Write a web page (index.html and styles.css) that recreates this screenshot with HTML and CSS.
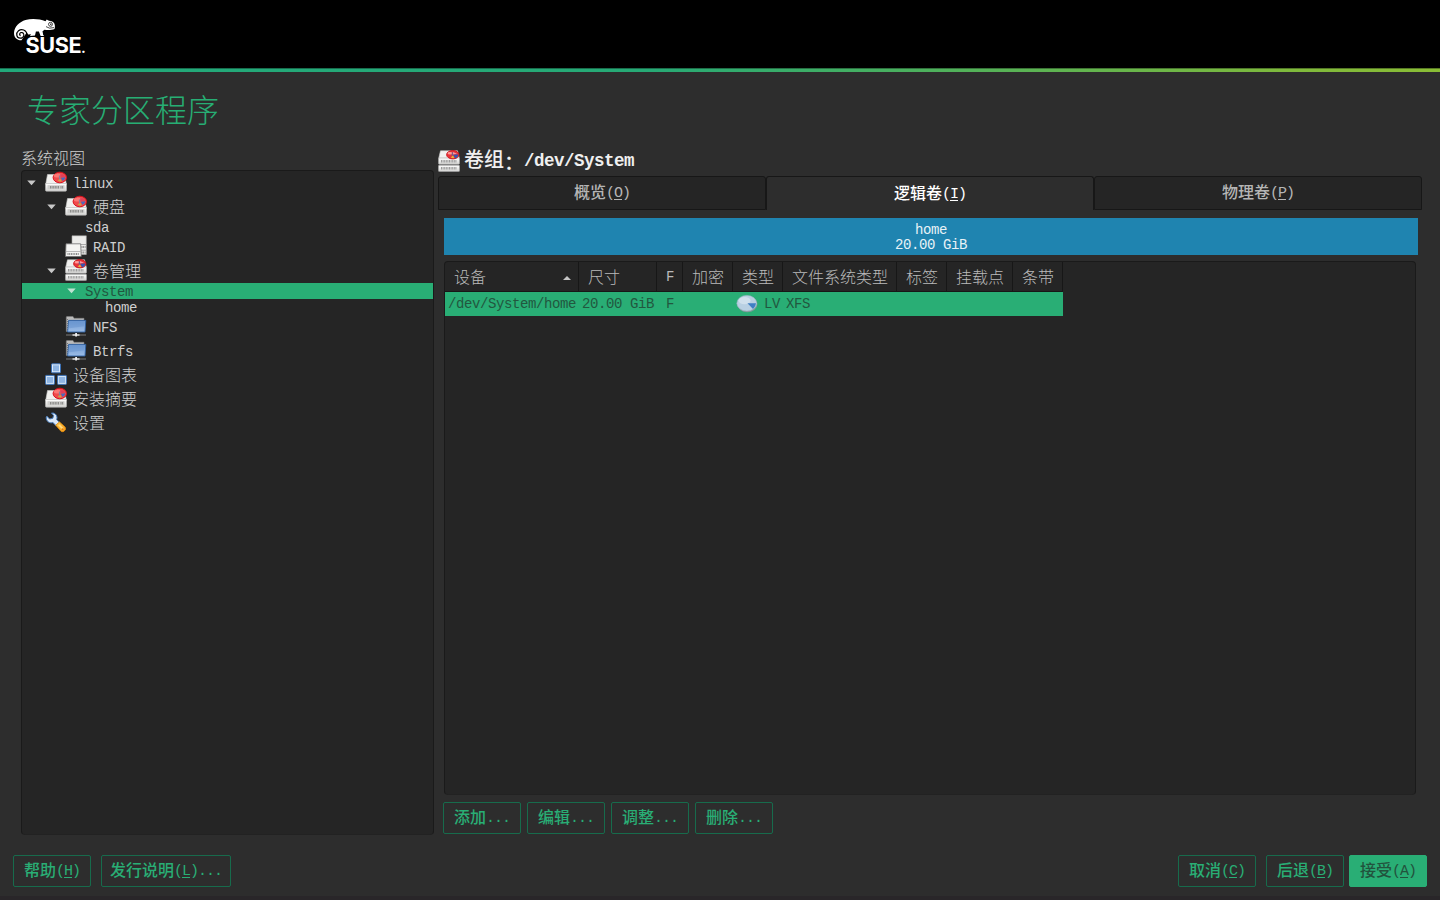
FILE: index.html
```html
<!DOCTYPE html>
<html lang="zh-CN">
<head>
<meta charset="utf-8">
<title>专家分区程序</title>
<link rel="stylesheet" href="styles.css">
</head>
<body>
<svg class="defs" aria-hidden="true">
  <defs>
    <linearGradient id="gBody" x1="0" y1="0" x2="0" y2="1"><stop offset="0" stop-color="#ffffff"/><stop offset="1" stop-color="#d2d2d0"/></linearGradient>
    <linearGradient id="gBlue" x1="0" y1="0" x2="0" y2="1"><stop offset="0" stop-color="#6c99d2"/><stop offset="1" stop-color="#9dbde6"/></linearGradient>
    <linearGradient id="gOrange" x1="0" y1="0" x2="1" y2="1"><stop offset="0" stop-color="#ffcf52"/><stop offset="1" stop-color="#f59a1c"/></linearGradient>
    <symbol id="disk" viewBox="0 0 22 22">
      <path d="M2.500 3.500h17l1.900 10H.7z" fill="#f1f1ef" stroke="#cfcfcd" stroke-width=".6"/>
      <path d="M.5 12.500h21v6.800q0 .9-1 .9h-19q-1 0-1-.9z" fill="url(#gBody)" stroke="#b5b5b3" stroke-width=".6"/>
      <path d="M2.500 14.200h17v4h-17z" fill="#cfcfcd"/>
      <path d="M5 16.200h9M15.500 16.200h3" stroke="#8c8c8a" stroke-width="2.600" stroke-dasharray="1 .6"/>
      <ellipse cx="14.800" cy="6.500" rx="6.700" ry="5.300" fill="#f04a4c" stroke="#d9101c" stroke-width="1"/>
      <ellipse cx="12.800" cy="4.500" rx="4.200" ry="2" fill="#ff8a86" opacity=".7"/>
      <path d="M15.200 6V2.900q3.700 0 4.800 2.800z" fill="#e0405c"/>
      <path d="M15.800 6.800l4.500-.5q0 2.600-2.600 3.700z" fill="#4b69bd"/>
      <path d="M14.800 7l2 3.300q-2.200.6-4-.2z" fill="#cda544"/>
      <path d="M14.500 4.500v4" stroke="#8a7f9a" stroke-width="1.200"/>
    </symbol>
    <symbol id="volume" viewBox="0 0 22 22">
      <path d="M2.500 .8h17l1.800 7.500H.7z" fill="#f1f1ef" stroke="#cfcfcd" stroke-width=".6"/>
      <rect x=".5" y="8" width="21" height="6.300" rx=".8" fill="url(#gBody)" stroke="#aaa" stroke-width=".6"/>
      <rect x=".5" y="15.200" width="21" height="6.400" rx=".8" fill="url(#gBody)" stroke="#aaa" stroke-width=".6"/>
      <path d="M3 11.200h16M3 18.300h16" stroke="#9c9c9c" stroke-width="2.600" stroke-dasharray="1 .6"/>
      <ellipse cx="14.800" cy="4.700" rx="6.200" ry="4.200" fill="#e9343a" stroke="#c5101a" stroke-width=".9"/>
      <ellipse cx="12" cy="3.300" rx="2.500" ry="1.300" fill="#ff9a96"/>
      <path d="M15 4.500V2l4 1.800z" fill="#f09aa4"/>
      <path d="M15.200 4.800l5-.3q0 2.700-3 3.800z" fill="#3456b2"/>
      <path d="M14.800 5l1.500 3.200-3.400-.3z" fill="#e4b63e"/>
      <path d="M14.300 2.400v3.400" stroke="#5c5f9a"/>
    </symbol>
    <symbol id="raid" viewBox="0 0 22 22">
      <path d="M7 .8h14.300V19.500H7z" fill="#ececea" stroke="#aaa" stroke-width=".6"/>
      <path d="M7 9.500h14.300M7 15.200h14.300" stroke="#999" stroke-width=".8"/>
      <path d="M16.500 12h4M16.500 17.500h4" stroke="#888" stroke-width="2" stroke-dasharray="1 .7"/>
      <path d="M1 8.800h14.700l.5 12.700H.5z" fill="#f4f4f2" stroke="#707070" stroke-width=".8"/>
      <path d="M.8 16.500h15" stroke="#aaa" stroke-width=".8"/>
      <path d="M2.500 19h11.500" stroke="#8a8a8a" stroke-width="2" stroke-dasharray="1 .7"/>
    </symbol>
    <symbol id="folder" viewBox="0 0 22 22">
      <path d="M1.300 16.500V2.200q0-.7.700-.7h6l1 1.800h10V5.500H4v11z" fill="#bababa" stroke="#7d7d7d" stroke-width=".6"/>
      <path d="M2.500 4v11" stroke="#777" stroke-width="1" stroke-dasharray="1 1"/>
      <path d="M3.600 5.400h17.200L20 17H2.600z" fill="url(#gBlue)" stroke="#2f62a5" stroke-width=".9"/>
      <path d="M4.500 6.300h15.300l-.4 5-15.200 2z" fill="#6390cb" opacity=".45"/>
      <path d="M1 20h20" stroke="#7d7d7d" stroke-width="1"/>
      <path d="M7.500 20h7" stroke="#e6e6e6" stroke-width="1.400"/>
      <path d="M10.200 18h1.800v3.600h-1.800z" fill="#f0f0f0"/>
    </symbol>
    <symbol id="graph" viewBox="0 0 22 22">
      <g fill="#dceaf9" stroke="#3b71b6" stroke-width="1">
        <rect x="6.500" y=".8" width="9" height="9" rx=".7"/>
        <rect x=".6" y="12.400" width="8.800" height="9" rx=".7"/>
        <rect x="12.600" y="12.400" width="8.800" height="9" rx=".7"/>
      </g>
      <g fill="#8fb5e3">
        <rect x="8" y="2.300" width="6" height="6"/>
        <rect x="2" y="13.900" width="6" height="6"/>
        <rect x="14" y="13.900" width="6" height="6"/>
      </g>
    </symbol>
    <symbol id="wrench" viewBox="0 0 22 22">
      <path d="M6.500 2C9.500 1.600 11.800 3.500 12 6.200c0 .9-.1 1.500-.4 2.200l3 3-3.400 3.400-3.300-3.200C4.500 12.500 1.300 10.300 1.200 6.700l.6-1.600L4.600 8l3.200-.7.800-2.700z" fill="#dbe8f7" stroke="#4478b8" stroke-width="1"/>
      <path d="M10.800 14.300l3.600-3.400 5.700 5.200q1.400 2.700-1.300 4.300-1.900.9-3.200-.6z" fill="url(#gOrange)" stroke="#e08a0a" stroke-width=".9"/>
      <path d="M13.800 13.800l4.200 4" stroke="#ffdc83" stroke-width="1.600"/>
      <circle cx="17.600" cy="18.200" r=".9" fill="#e17a08"/>
    </symbol>
    <symbol id="pie" viewBox="0 0 22 22">
      <ellipse cx="11.300" cy="11.500" rx="10" ry="7.800" fill="#7f9a97"/>
      <ellipse cx="10.800" cy="10.200" rx="9.900" ry="7.800" fill="#b9d0e3" stroke="#a3b9ca" stroke-width=".6"/>
      <ellipse cx="8.600" cy="7.600" rx="6" ry="3.700" fill="#d0e0ed"/>
      <path d="M11.500 10.200h8.500q-.3 3.600-3 5.800z" fill="#3f7fc4"/>
    </symbol>
    <symbol id="down" viewBox="0 0 10 6"><path d="M.3.3h9.400L5 5.500z" fill="currentColor"/></symbol>
  </defs>
</svg>

<header class="banner">
  <svg class="logo" viewBox="0 0 74 38">
    <path d="M8.500 22.300C4 22.500.9 19.300 1 15 1.300 8.500 6.500 3.800 12.500 2 19 .2 27 1 32.500 3.300l1.200-1.900L36 2.700c2.600.1 4.300.9 5.200 2.600 1 2 .8 4 .3 5.800-3 1.100-7 1.100-10 .7l-2 1.500.7 3.700 1 .9h-3.600l-1.700-4.400h-3l-.9 3.900-5 .6 1-1.700-2.800.2-1.500-1.900z" fill="#fff"/>
    <path d="M14 16.500C13.500 11.800 8.500 10.300 5.500 12.700c-3 2.500-2 7.300 1.700 7.500 3.700.2 5-4.700 1.900-5.600-2.400-.6-3.300 2.300-1.500 3" fill="none" stroke="#000" stroke-width="1.200"/>
    <circle cx="37.500" cy="6.300" r="2" fill="#fff" stroke="#000" stroke-width=".7"/>
    <circle cx="37.800" cy="6.200" r=".7"/>
    <path d="M33 8.600q3 2.600 8 1" stroke="#000" stroke-width=".7" fill="none"/>
    <text class="wordmark" transform="translate(12.500 34.600) scale(1.030 1)" letter-spacing="-.4">SUSE<tspan class="dot">.</tspan></text>
  </svg>
</header>
<div class="stripe"></div>
<h1 class="title">专家分区程序</h1>

<main class="main">
  <section class="side">
    <div class="label">系统视图</div>
    <div class="tree">
      <div class="row l1"><svg class="arrow"><use href="#down"/></svg><svg class="icon"><use href="#disk"/></svg><span class="m">linux</span></div>
      <div class="row l2"><svg class="arrow"><use href="#down"/></svg><svg class="icon"><use href="#disk"/></svg><span>硬盘</span></div>
      <div class="row l3 short"><i class="gap"></i><span class="m">sda</span></div>
      <div class="row l2"><i class="gap"></i><svg class="icon"><use href="#raid"/></svg><span class="m">RAID</span></div>
      <div class="row l2"><svg class="arrow"><use href="#down"/></svg><svg class="icon"><use href="#volume"/></svg><span>卷管理</span></div>
      <div class="row l3 short selected"><svg class="arrow"><use href="#down"/></svg><span class="m">System</span></div>
      <div class="row l4 short"><i class="gap"></i><span class="m">home</span></div>
      <div class="row l2"><i class="gap"></i><svg class="icon"><use href="#folder"/></svg><span class="m">NFS</span></div>
      <div class="row l2"><i class="gap"></i><svg class="icon"><use href="#folder"/></svg><span class="m">Btrfs</span></div>
      <div class="row l1"><i class="gap"></i><svg class="icon"><use href="#graph"/></svg><span>设备图表</span></div>
      <div class="row l1"><i class="gap"></i><svg class="icon"><use href="#disk"/></svg><span>安装摘要</span></div>
      <div class="row l1"><i class="gap"></i><svg class="icon"><use href="#wrench"/></svg><span>设置</span></div>
    </div>
  </section>

  <section class="content">
    <h2 class="heading"><svg class="icon"><use href="#volume"/></svg><span>卷组<span class="colon">：</span><span class="m">/dev/System</span></span></h2>
    <div class="tabs">
      <div class="tab"><span>概览<span class="m">(<u>O</u>)</span></span></div>
      <div class="tab active"><span>逻辑卷<span class="m">(<u>I</u>)</span></span></div>
      <div class="tab"><span>物理卷<span class="m">(<u>P</u>)</span></span></div>
    </div>
    <div class="usage m"><div>home</div><div>20.00 GiB</div></div>
    <div class="table">
      <div class="grid head">
        <div>设备<svg class="sort" viewBox="0 0 8 4"><path d="M0 4h8L4 0z" fill="currentColor"/></svg></div>
        <div>尺寸</div><div class="m">F</div><div>加密</div><div>类型</div><div>文件系统类型</div><div>标签</div><div>挂载点</div><div>条带</div>
      </div>
      <div class="grid record m">
        <div>/dev/System/home</div><div>20.00 GiB</div><div class="flag">F</div><div></div>
        <div><svg class="icon"><use href="#pie"/></svg>LV</div><div>XFS</div><div></div><div></div><div></div>
      </div>
    </div>
    <div class="actions">
      <button class="btn">添加<span class="m">...</span></button>
      <button class="btn">编辑<span class="m">...</span></button>
      <button class="btn">调整<span class="m">...</span></button>
      <button class="btn">删除<span class="m">...</span></button>
    </div>
  </section>
</main>

<footer class="footer">
  <button class="btn">帮助<span class="m">(<u>H</u>)</span></button>
  <button class="btn notes">发行说明<span class="m">(<u>L</u>)...</span></button>
  <button class="btn cancel">取消<span class="m">(<u>C</u>)</span></button>
  <button class="btn back">后退<span class="m">(<u>B</u>)</span></button>
  <button class="btn primary">接受<span class="m">(<u>A</u>)</span></button>
</footer>
</body>
</html>
```
FILE: styles.css
```css
* { box-sizing: border-box; }
body {
  margin: 0;
  width: 1440px;
  height: 900px;
  overflow: hidden;
  display: flex;
  flex-direction: column;
  background: #2d2d2d;
  border-bottom: 4px solid #292629;
  color: #cfcfcf;
  font: 300 16px/24px "Noto Sans CJK SC", sans-serif;
}
.defs { position: absolute; width: 0; height: 0; }
.m {
  font-family: "Liberation Mono", "Noto Sans CJK SC", monospace;
  font-size: 14px;
  letter-spacing: -0.4px;
  font-weight: 400;
}
u { text-underline-offset: 2px; text-decoration-thickness: 1px; }
.banner { height: 68px; flex: none; background: #000; padding: 18px 0 0 13px; }
.logo { display: block; width: 74px; height: 38px; overflow: visible; }
.wordmark {
  font: 700 21px "Inter", sans-serif;
  fill: #fff;
}
.wordmark .dot { font-size: 14px; }
.stripe {
  height: 4px;
  flex: none;
  background: linear-gradient(90deg, #22a97b 0%, #27aa76 45%, #80ba3c 90%, #8abd36 100%);
  border-top: 1px solid rgba(0, 0, 0, 0.35);
}
.title {
  margin: 0;
  padding-left: 27px;
  height: 76px;
  flex: none;
  font-size: 32px;
  font-weight: 300;
  line-height: 72px;
  color: #27ae74;
}
.main { height: 691px; flex: none; display: flex; gap: 4px; padding-left: 21px; }
.side { width: 413px; display: flex; flex-direction: column; }
.label { height: 22px; line-height: 18px; }
.tree {
  height: 665px;
  background: #252525;
  border: 1px solid #1a1a1a;
  border-bottom-color: #222;
  border-radius: 4px;
}
.row { display: flex; align-items: center; height: 24px; line-height: 22px; padding-left: 5px; white-space: nowrap; }
.row > span { margin-top: -2px; }
.row > .m { margin-top: 2px; }
.row.short { height: 16px; line-height: 14px; }
.row.l2 { padding-left: 25px; }
.row.l3 { padding-left: 45px; }
.row.l4 { padding-left: 65px; }
.row.selected { background: #29ae75; color: #22573f; }
.arrow { width: 9px; height: 6px; color: #c8c8c8; margin-right: 9px; flex: none; }
.selected .arrow { color: #bfe3d2; }
.gap { width: 18px; flex: none; }
.icon { width: 22px; height: 22px; flex: none; }
.row .icon { margin: -2px 6px 0 0; }

.content { width: 984px; display: flex; flex-direction: column; }
.heading {
  display: flex;
  align-items: center;
  gap: 4px;
  height: 28px;
  margin: 0;
  padding-bottom: 3px;
  font-size: 20px;
  font-weight: 500;
  color: #f0f0f0;
}
.heading .colon { position: relative; top: 3px; }
.heading .m { font-size: 17.5px; letter-spacing: -0.5px; font-weight: 700; position: relative; top: -1px; }
.tabs { display: grid; grid-template-columns: repeat(3, 328px); height: 34px; }
.tab {
  display: flex;
  align-items: center;
  justify-content: center;
  background: #252525;
  border: 1px solid #171717;
  border-radius: 3px 3px 0 0;
  color: #b5b5b5;
  font-weight: 500;
}
.tab.active { background: #2d2d2d; border-bottom: 0; color: #fff; }
.tab .m, .btn .m { font-size: 15px; letter-spacing: -1px; position: relative; top: -1px; }
.usage {
  width: 974px;
  height: 37px;
  margin: 8px 0 6px 6px;
  padding-top: 5px;
  background: #1f84b0;
  color: #e8f2f7;
  line-height: 15px;
  text-align: center;
}
.table {
  width: 972px;
  height: 534px;
  margin-left: 6px;
  background: #252525;
  border: 1px solid #1a1a1a;
  border-bottom-color: #222;
  border-radius: 4px;
}
.grid { display: grid; grid-template-columns: 134px 78px 26px 50px 50px 114px 50px 66px 50px; width: 618px; white-space: nowrap; }
.head { height: 30px; color: #bababa; }
.head > div {
  display: flex;
  align-items: center;
  padding: 0 0 2px 9px;
  border-right: 1px solid #171717;
  border-bottom: 1px solid #171717;
}
.head > .m { padding-bottom: 0; padding-top: 1px; }
.sort { width: 8px; height: 4px; margin: 4px 7px 0 auto; color: #c5c5c5; }
.record { height: 24px; background: #29ae75; color: #22573f; }
.record > div { display: flex; align-items: center; padding: 0 0 0 3px; }
.record > .flag { padding-left: 9px; }
.record .icon { margin: -1px 6px 0 0; }
.actions { display: flex; gap: 6px; padding: 7px 0 0 5px; }
.btn {
  width: 78px;
  height: 32px;
  padding: 0;
  flex: none;
  background: transparent;
  border: 1px solid #176b4c;
  border-radius: 2px;
  color: #29ae75;
  font: 500 16px/24px "Noto Sans CJK SC", sans-serif;
  white-space: nowrap;
}
.footer { display: flex; align-items: flex-start; padding: 16px 13px 0; }
.notes { width: 130px; margin-left: 10px; }
.cancel { margin-left: auto; }
.back { margin: 0 5px 0 10px; }
.primary { background: #29ae75; border-color: #29ae75; color: #22533d; }
```
